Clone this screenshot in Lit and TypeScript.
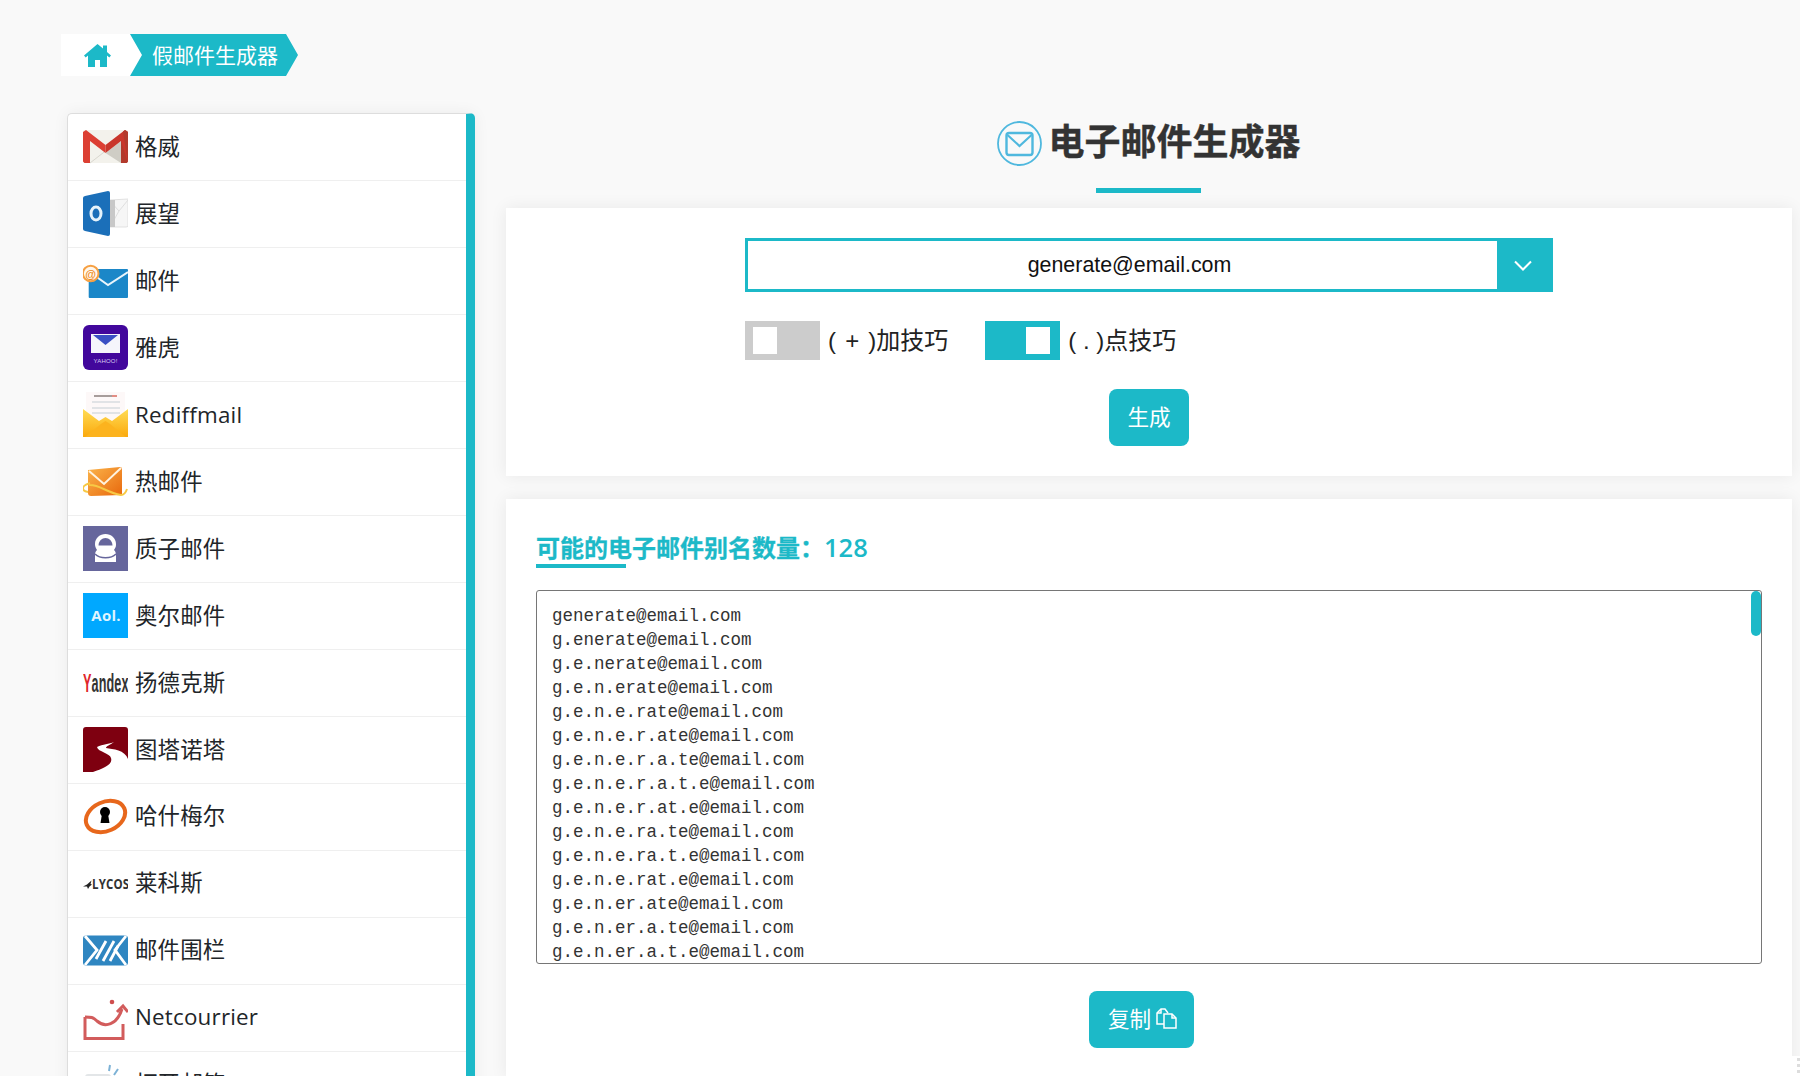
import { LitElement, html, css, svg } from "lit";
import { customElement } from "lit/decorators.js";

const icons = [
  // Gmail
  svg`<rect y="6" width="45" height="33" rx="1.5" fill="#f3f2ec"/><path d="M7 17 22.5 29 38 17V39L22.5 29Z" fill="#cfcdc5"/><path d="M7 39 22.5 27" stroke="#d9d7cf" fill="none"/><path d="M0 8 3 6 22.5 21 22.5 29 7 17V39H1.5L0 37.5Z" fill="#dc3f33"/><path d="M45 8 42 6 22.5 21V29L38 17V39H43.5L45 37.5Z" fill="#c9372c"/><path d="M38 17V39H43.5L45 37.5V8L42 6 40 7.5 45 39" fill="#b23a2c"/>`,
  // Outlook
  svg`<path d="M27 9 45 8V35.5L43 36H27Z" fill="#f6f6f6" stroke="#e1e1e1"/><path d="M27 10 36 20 45 9M27 36 36 20" fill="none" stroke="#dedede"/><rect x="27" y="9" width="5" height="27" fill="#c8c8c8"/><path d="M2 5 25 0Q27 0 27 2V43Q27 45 25 45L2 40Q0 39.500 0 38V7Q0 5.500 2 5Z" fill="#1b6fb9"/><ellipse cx="13" cy="22.500" rx="5" ry="6.500" fill="none" stroke="#e6f3fb" stroke-width="3"/>`,
  // Mail.com
  svg`<rect x="5.700" y="11" width="39.300" height="29" rx="1" fill="#1b87c8"/><path d="M8 15 25 27 45 14" fill="none" stroke="#eaf5fb" stroke-width="2"/><circle cx="7.700" cy="15.500" r="7.800" fill="#fff7ec" stroke="#f6a043" stroke-width="2"/><text x="7.700" y="19.500" font-size="11" text-anchor="middle" fill="#ee8a20" font-family="Liberation Sans" font-weight="700">@</text>`,
  // Yahoo
  svg`<rect width="45" height="45" rx="6" fill="#42079c"/><rect x="8" y="9" width="29" height="19" fill="#f5f5fb"/><path d="M10 10H35L22.500 20Z" fill="#3a4fc4"/><text x="22.500" y="38" font-size="6" text-anchor="middle" fill="#d9cdf2" font-family="Liberation Sans">YAHOO!</text>`,
  // Rediffmail
  svg`<defs><linearGradient id="rm" x1="0" y1="0" x2="0" y2="1"><stop offset="0" stop-color="#ffdc55"/><stop offset="1" stop-color="#fba90c"/></linearGradient></defs><rect x="3" y="0" width="39" height="34" fill="#fdf8f8"/><path d="M11 4H29" stroke="#8a7f7c" stroke-width="1.500"/><path d="M29 4H34" stroke="#d86a5e" stroke-width="1.500"/><path d="M9 10H37M9 16H37M9 21H37" stroke="#d8dbe0" stroke-width="1.500"/><path d="M0 17 16 29 22.500 25 29 29 45 17V45H0Z" fill="url(#rm)"/><path d="M2 45 18 32 22.500 29 27 32 43 45Z" fill="#fcb31e"/>`,
  // Hotmail
  svg`<defs><linearGradient id="hm" x1="0" y1="0" x2="1" y2="1"><stop offset="0" stop-color="#fbb44a"/><stop offset="1" stop-color="#e8680d"/></linearGradient></defs><path d="M5 11 37 8Q39 8 39 10V36L8 37Q5 37 5 34Z" fill="url(#hm)"/><path d="M6 12 21 25 38 9" fill="none" stroke="#fff3df" stroke-width="2"/><path d="M7 24C-3 27-1 32 5 33M6 26C16 25 24 34 38 36 41 36 43 33 44 30" fill="none" stroke="#f7c945" stroke-width="2"/>`,
  // Proton
  svg`<rect width="45" height="45" fill="#66669c"/><path d="M12 30C12 26 13 25 14 24 12 21 12 19 12 18 12 12 17 8 22.500 8 28 8 33 12 33 18 33 20 33 21 31 24 32 25 33 26 33 30V36H12Z" fill="#fff"/><path d="M15.500 19.500C15.500 15 19 12 22.500 12 26 12 29.500 15 29.500 19.500Z" fill="#66669c"/><path d="M12 28C17 33 28 33 33 28" fill="none" stroke="#66669c" stroke-width="1.500"/>`,
  // AOL
  svg`<rect width="45" height="45" fill="#00a8ff"/><text x="23" y="28" font-size="15" font-weight="700" text-anchor="middle" fill="#dff4ff" font-family="Open Sans">Aol.</text>`,
  // Yandex
  svg`<text transform="translate(0 31.500) scale(.505 1)" font-size="25" font-weight="700" fill="#333" font-family="Liberation Sans"><tspan fill="#e0262b">Y</tspan>andex</text>`,
  // Tutanota
  svg`<path d="M3 0H42Q45 0 45 3V32C42 23 30 22 23 21 23 19 27 18 31 15 26 17 20 17 14 20 15 25 27 26 28 31 30 37 22 41 10 45H0V3Q0 0 3 0Z" fill="#7e0010"/>`,
  // Hushmail
  svg`<ellipse cx="22.500" cy="22.500" rx="20.500" ry="14.500" transform="rotate(-24 22.500 22.500)" fill="#fff" stroke="#e7671c" stroke-width="4"/><circle cx="22" cy="18" r="5"/><path d="M19 20H25L26.500 29H17.500Z"/>`,
  // Lycos
  svg`<path d="M0 25.500 4 23.500 8.500 19.500 7.500 23 9 23.500 6.500 25.500 5 28 4 25.500Z" fill="#222"/><text transform="translate(9 27.500) scale(.82 1)" font-size="14" font-weight="700" fill="#333" font-family="Open Sans">LYCOS</text>`,
  // Mailfence
  svg`<rect y="7.500" width="45" height="30" rx="3" fill="#2f86c1"/><path d="M2 8 14 22 2 37M43 8 32 22 43 37" stroke="#fff" stroke-width="2.800" fill="none"/><path d="M13 31 23 13M20 33 31 13M27 33 35 18" stroke="#fff" stroke-width="2.800" fill="none"/>`,
  // Netcourrier
  svg`<circle cx="29" cy="7" r="2.300" fill="#cf4e4e"/><path d="M2 22C8 22 10 22 14 26 22 33 34 30 39 14" fill="none" stroke="#d25c5c" stroke-width="3"/><path d="M34 17 40 11 45 17" fill="none" stroke="#d25c5c" stroke-width="3"/><path d="M2 22V43.500H40V29" fill="none" stroke="#d25c5c" stroke-width="3"/>`,
  // Last row
  svg`<path d="M27 3 26 9M35 7 31 13" stroke="#7db2d6" stroke-width="2"/><rect x="2" y="12" width="26" height="28" rx="3" fill="#e3e6e8"/>`,
];

const names = ["格威","展望","邮件","雅虎","Rediffmail","热邮件","质子邮件","奥尔邮件","扬德克斯","图塔诺塔","哈什梅尔","莱科斯","邮件围栏","Netcourrier","打开邮箱"];

function aliases(prefix: string, rest: string, out: string[]) {
  out.push(prefix + rest + "@email.com");
  for (let i = 1; i < rest.length; i++) {
    aliases(prefix + rest.slice(0, i) + ".", rest.slice(i), out);
  }
  return out;
}

@customElement("app-root")
export class AppRoot extends LitElement {
  static styles = css`
    :host {
      display: block;
      position: relative;
      height: 1076px;
      overflow: hidden;
      background: #f9f9f9;
      color: #212529;
      font-family: "Open Sans", "Noto Sans CJK SC", sans-serif;
    }
    .topshade { height: 0; box-shadow: 0 0 9px rgba(0,0,0,.18); }
    .page { padding: 34px 8px 0 61px; }
    .crumbs { display: flex; height: 42px; }
    .home {
      width: 81px; margin-right: -12px; background: #fff;
      clip-path: polygon(0 0, 69px 0, 81px 50%, 69px 100%, 0 100%);
      display: flex; align-items: center; padding-left: 23px; box-sizing: border-box;
    }
    .home svg { display: block; }
    .current {
      width: 168px; background: #1cb9c8; color: #fff; box-sizing: border-box;
      clip-path: polygon(0 0, 156px 0, 168px 50%, 156px 100%, 0 100%, 12px 50%);
      display: flex; align-items: center; padding: 0 0 2px 22px;
      font: 21px/1 "Noto Sans CJK SC", sans-serif;
    }
    .columns { display: flex; gap: 31px; margin: 37px 0 0 6px; align-items: flex-start; }
    .side {
      width: 408px; flex: none; box-sizing: border-box; background: #fff;
      border: 1px solid #ddd; border-right: 9px solid #1cb9c8; border-radius: 5px;
      box-shadow: 0 0 16px rgba(0,0,0,.06);
    }
    .row {
      height: 66.970px; box-sizing: border-box; border-bottom: 1px solid #efefef;
      display: flex; align-items: center; padding-left: 15px; gap: 7px;
      font-size: 22.400px; line-height: 1; letter-spacing: .2px;
    }
    .row svg { flex: none; display: block; }
    .main { width: 1286px; flex: none; padding-top: 8px; }
    .title {
      display: flex; align-items: center; justify-content: center; gap: 6px; height: 45px;
      font: 700 36px/45px "Noto Sans CJK SC", sans-serif; color: #333; margin: 0;
      -webkit-text-stroke: .4px #333;
    }
    .title svg { display: block; }
    .title span { padding-bottom: 9px; }
    .rule { width: 105px; height: 5px; background: #1cb9c8; margin: 22px 0 15px 590px; }
    .card { background: #fff; box-shadow: 0 0 16px rgba(0,0,0,.07); }
    .gen { padding: 30px 239px; display: flex; flex-direction: column; }
    .select {
      height: 54px; box-sizing: border-box; border: 3px solid #1cb9c8; display: flex;
      font: 21.400px "Liberation Sans", sans-serif; color: #111;
    }
    .select .value { flex: 1; display: flex; align-items: center; justify-content: center; padding-left: 14px; }
    .select .arrow { width: 53px; background: #1cb9c8; display: flex; align-items: center; justify-content: center; padding-right: 2px; box-sizing: border-box; }
    .opts { display: flex; margin-top: 29px; height: 39px; align-items: center; gap: 37px; }
    .opt { display: flex; align-items: center; gap: 8px; font: 24px/39px "Liberation Sans", "Noto Sans CJK SC", sans-serif; color: #222; }
    .opt.wide { word-spacing: 2.500px; }
    .toggle { width: 75px; height: 39px; box-sizing: border-box; padding: 6px 8px; display: flex; background: #ccc; }
    .toggle.on { background: #1cb9c8; justify-content: flex-end; padding-right: 10px; }
    .toggle i { display: block; width: 24px; height: 27px; background: #fff; }
    .btn {
      align-self: center; background: #1cb9c8; color: #fff; border: 0; border-radius: 8px; height: 57px;
      font: 21.600px "Noto Sans CJK SC", sans-serif; padding: 0 0 5px; display: flex; align-items: center; justify-content: center;
    }
    .gen .btn { width: 80px; margin-top: 29px; }
    .results { margin-top: 23px; padding: 30px 30px 30px; }
    .count {
      margin: 0; height: 35px; box-sizing: border-box;
      font: 700 24px/32px "Open Sans", "Noto Sans CJK SC", sans-serif; color: #1cb9c8; padding-top: 3px;
      -webkit-text-stroke: .3px #1cb9c8;
    }
    .count b { font-size: 25.500px; font-weight: 600; line-height: 1; -webkit-text-stroke: 0; }
    .count-rule { width: 90px; height: 4px; background: #1cb9c8; margin: 0 0 22px; }
    .list {
      height: 374px; box-sizing: border-box; border: 1px solid #767676; border-radius: 3px; overflow: hidden;
      padding: 13px 15px; font: 17.500px/24px "Liberation Mono", monospace; color: #333; white-space: pre;
      position: relative;
    }
    .thumb { position: absolute; top: 0; right: 0; width: 10px; height: 45px; background: #1cb9c8; border-radius: 5px; }
    .copyrow { display: flex; justify-content: center; padding-right: 15px; margin-top: 27px; }
    .copyrow .btn { width: 105px; gap: 5px; padding-left: 2px; }
    .copyrow svg { display: block; margin-top: 3px; }
    .corner {
      position: absolute; right: 0; bottom: 0; width: 8px; height: 20px; background: #fff;
    }
    .corner i { display: block; width: 3px; height: 3px; background: #ddd; margin: 2px 0 3px 5px; }
  `;

  render() {
    const list = aliases("", "generate", []);
    return html`
      <div class="topshade"></div>
      <div class="page">
        <nav class="crumbs">
          <a class="home">
            <svg width="27" height="23" viewBox="0 0 27 23" fill="#1cb9c8"><path d="M13.500 0 0 11.500 1.700 13.500 4 11.600V23H11V16H16V23H23V11.600L25.300 13.500 27 11.500 23 8V1.500H19V4.500Z"/></svg>
          </a>
          <span class="current">假邮件生成器</span>
        </nav>
        <div class="columns">
          <aside class="side">
            ${names.map((n, i) => html`
              <div class="row">
                <svg width="45" height="45" viewBox="0 0 45 45">${icons[i]}</svg>
                <span>${n}</span>
              </div>`)}
          </aside>
          <main class="main">
            <h1 class="title">
              <svg width="45" height="45" viewBox="0 0 45 45" fill="none" stroke="#4fb8de"><circle cx="22.500" cy="22.500" r="21.500" stroke-width="1.800"/><rect x="9.500" y="12" width="26" height="22" rx="2.500" stroke-width="2.400"/><path d="M10.500 14 22.500 25 34.500 14" stroke-width="2.200"/></svg>
              <span>电子邮件生成器</span>
            </h1>
            <div class="rule"></div>
            <section class="card gen">
              <div class="select">
                <div class="value">generate@email.com</div>
                <div class="arrow"><svg width="18" height="11" viewBox="0 0 18 11" fill="none" stroke="#fff" stroke-width="2"><path d="M1 1.500 9 9.500 17 1.500"/></svg></div>
              </div>
              <div class="opts">
                <label class="opt wide"><span class="toggle"><i></i></span>( + )加技巧</label>
                <label class="opt"><span class="toggle on"><i></i></span>( . )点技巧</label>
              </div>
              <button class="btn">生成</button>
            </section>
            <section class="card results">
              <h2 class="count">可能的电子邮件别名数量：<b>128</b></h2>
              <div class="count-rule"></div>
              <div class="list">${list.join("\n")}<div class="thumb"></div></div>
              <div class="copyrow">
                <button class="btn">复制
                  <svg width="21" height="21" viewBox="0 0 21 21" fill="none" stroke="#fff" stroke-width="1.500"><path d="M9 16H1V5L5 1H9L12 5"/><path d="M5 1V5H1"/><path d="M8 6H16L20 10V20H8Z" fill="#1cb9c8"/><path d="M16 6V10H20" /></svg>
                </button>
              </div>
            </section>
          </main>
        </div>
      </div>
      <div class="corner"><i></i><i></i><i></i></div>
    `;
  }
}
